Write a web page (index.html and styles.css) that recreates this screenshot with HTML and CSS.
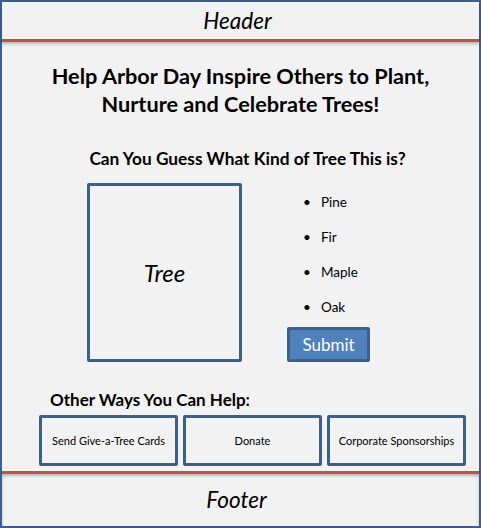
FILE: index.html
```html
<!DOCTYPE html>
<html lang="en">
<head>
    <meta charset="UTF-8">
    <title>Arbor Day - Tree Quiz</title>
    <link rel="stylesheet" href="styles.css">
</head>
<body>
    <div class="page">
        <div class="header">Header</div>

        <div class="main">
            <h1>Help Arbor Day Inspire Others to Plant,<br>Nurture and Celebrate Trees!</h1>
            <h2 class="quiz-title">Can You Guess What Kind of Tree This is?</h2>

            <div class="quiz">
                <div class="tree-box">Tree</div>
                <div class="answers">
                    <ul>
                        <li>Pine</li>
                        <li>Fir</li>
                        <li>Maple</li>
                        <li>Oak</li>
                    </ul>
                    <button class="submit">Submit</button>
                </div>
            </div>

            <h2 class="help-title">Other Ways You Can Help:</h2>
            <div class="cards">
                <div class="card">Send Give-a-Tree Cards</div>
                <div class="card">Donate</div>
                <div class="card">Corporate Sponsorships</div>
            </div>
        </div>

        <div class="footer">Footer</div>
    </div>
</body>
</html>
```

FILE: styles.css
```css
body {
    margin: 0;
    font-family: Lato, "Open Sans", sans-serif;
    color: #000;
}
.page {
    width: 481px;
    height: 528px;
    box-sizing: border-box;
    border: 2px solid #3c5f8d;
    background-color: #f2f2f2;
    display: flex;
    flex-direction: column;
}
.header {
    height: 37px;
    line-height: 37px;
    padding-right: 6px;
    text-align: center;
    font-style: italic;
    font-size: 22.5px;
    border-bottom: 3px solid #c0504d;
    box-shadow: 0 2px 3px rgba(0,0,0,0.25);
    position: relative;
}
.main {
    flex: 1;
    padding-top: 20px;
}
h1 {
    margin: 0;
    font-size: 21.7px;
    line-height: 28px;
    text-align: center;
}
h2 {
    margin: 0;
    font-size: 16px;
    line-height: 20px;
}
.quiz-title {
    margin-top: 31px;
    text-align: center;
    padding-left: 14px;
    font-size: 17.3px;
}
.quiz {
    display: flex;
    margin-top: 14px;
    margin-left: 85px;
    gap: 45px;
}
.tree-box {
    width: 155px;
    height: 179px;
    box-sizing: border-box;
    border: 3px solid #3c5f8d;
    border-radius: 2px;
    display: flex;
    align-items: center;
    justify-content: center;
    font-size: 24px;
    font-style: italic;
}
.answers ul {
    list-style: none;
    margin: 2px 0 0;
    padding: 0 0 0 16px;
}
.answers li {
    height: 35px;
    line-height: 35px;
    font-size: 13.5px;
}
.answers li::before {
    content: "\2022";
    display: inline-block;
    width: 18px;
}
.submit {
    margin-top: 2px;
    width: 83px;
    height: 35px;
    background-color: #4f81bd;
    border: 3px solid #3c5f8d;
    border-radius: 2px;
    color: white;
    font-family: Lato, sans-serif;
    font-size: 17px;
    padding: 0;
}
.help-title {
    margin-top: 28px;
    margin-left: 48px;
    font-size: 17px;
}
.cards {
    display: flex;
    gap: 5px;
    margin: 5px 0 0 37px;
}
.card {
    width: 139px;
    height: 51px;
    box-sizing: border-box;
    border: 3px solid #3c5f8d;
    border-radius: 2px;
    display: flex;
    align-items: center;
    justify-content: center;
    font-size: 11px;
}
.footer {
    height: 52px;
    line-height: 52px;
    padding-right: 8px;
    text-align: center;
    font-style: italic;
    font-size: 22.5px;
    border-top: 3px solid #c0504d;
    box-shadow: 0 2px 3px rgba(0,0,0,0.25) inset;
}
```
